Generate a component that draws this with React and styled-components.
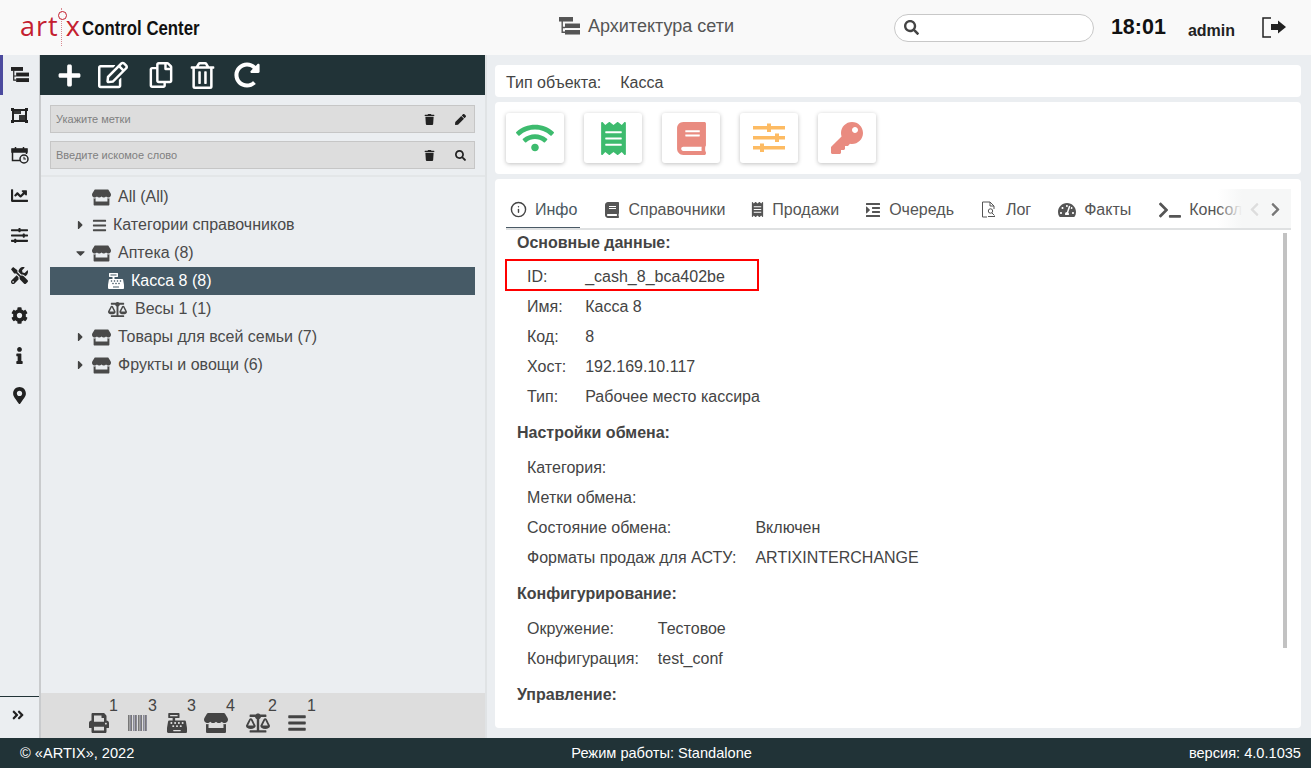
import React from 'react';
import styled, { createGlobalStyle } from 'styled-components';
import {
  FaPlus, FaRegEdit, FaRegCopy, FaRegTrashAlt, FaRedoAlt, FaTrash, FaPen, FaSearch, FaStore, FaBars,
  FaCashRegister, FaBalanceScale, FaCaretRight, FaCaretDown, FaChartLine, FaSlidersH,
  FaTools, FaCog, FaInfo, FaMapMarkerAlt, FaAngleDoubleRight, FaPrint, FaWifi, FaReceipt, FaBook, FaKey,
  FaTachometerAlt, FaChevronLeft, FaChevronRight, FaTerminal, FaIndent,
} from 'react-icons/fa';
import { FiInfo } from 'react-icons/fi';

const Global = createGlobalStyle`
  html, body { margin: 0; padding: 0; height: 100%; }
  body { font-family: "Liberation Sans", Arial, sans-serif; color: #444; background: #ebeef1; overflow: hidden; }
  * { box-sizing: border-box; }
`;

const Page = styled.div`width: 1311px; height: 768px; display: flex; flex-direction: column; overflow: hidden;`;
const Header = styled.header`height: 55px; flex: none; background: #f9f9f9; display: grid; grid-template-columns: 559px 1fr auto; align-items: center; padding-right: 24px;`;
const Logo = styled.div`display: flex; align-items: center; height: 55px; padding-left: 20px;`;
const LogoWord = styled.span`font-family: "Open Sans", sans-serif; font-size: 27px; font-weight: 400; color: #c4202f; letter-spacing: ${p => p.$spacing || 0}px; line-height: 1; margin-top: -4px;`;
const LogoStem = styled.span`position: relative; width: 8px; align-self: stretch; margin: 0 0 0 -1px;
  &::before { content: ''; position: absolute; left: 3px; top: 8px; height: 38px; border-left: 1px dotted #d98a92; }
  &::after { content: ''; position: absolute; left: 0; top: 11px; width: 7px; height: 7px; border: 1.5px solid #c4202f; border-radius: 50%; background: #f9f9f9; }
`;
const ProductName = styled.span`font-size: 21px; font-weight: 700; color: #111; margin-left: 2px; transform: scaleX(0.8); transform-origin: left center; white-space: nowrap; margin-top: 1px;`;
const Title = styled.div`display: flex; align-items: center; gap: 8px; font-size: 18px; color: #555; margin-top: -3px;`;
const HeaderRight = styled.div`display: flex; align-items: center;`;
const Search = styled.div`width: 200px; height: 28px; border: 1px solid #c8c8c8; border-radius: 14px; background: #fff; display: flex; align-items: center; padding-left: 9px; color: #444; font-size: 15px;`;
const Clock = styled.div`font-size: 21.5px; font-weight: 700; color: #111; margin-left: 17px; width: 54px;`;
const User = styled.div`font-size: 16px; font-weight: 700; color: #222; margin-left: 23px; margin-top: 6px;`;
const Logout = styled.svg`width: 25px; height: 21px; margin-left: 27px; color: #222;`;

const Main = styled.div`flex: 1; display: flex; min-height: 0;`;
const Rail = styled.nav`width: 40px; flex: none; background: #ebeef1; border-right: 1px solid #c9cbcd; display: flex; flex-direction: column;`;
const RailItem = styled.div`height: 40px; display: flex; align-items: center; justify-content: center; color: #222; font-size: 17px;
  border-left: 3px solid ${p => (p.$active ? '#4b4a9e' : 'transparent')}; padding-right: 3px;`;
const RailFoot = styled.div`margin-top: auto; height: 42px; border-top: 1px solid #213337; display: flex; align-items: center; justify-content: center; font-size: 14px; color: #222; padding: 0 3px 5px 0;`;

const TreePanel = styled.aside`width: 445px; flex: none; display: flex; flex-direction: column; background: #ebeef1;`;
const Toolbar = styled.div`height: 40px; flex: none; background: #213337; color: #fff; display: flex; align-items: center; padding-left: 17px; gap: 20px;`;
const PlusIcon = styled(FaPlus)`margin-right: -4px;`;
const TrashIcon = styled(FaRegTrashAlt)`margin-left: -5px;`;
const RedoIcon = styled(FaRedoAlt)`margin-left: -2px;`;
const PanelBody = styled.div`flex: 1; min-height: 0; display: flex; flex-direction: column; border-left: 1px solid #c9cbcd;`;
const Filters = styled.div`padding: 10px 10px 6px 9px; display: flex; flex-direction: column; gap: 8px; border-bottom: 2px solid #e3e6e8;`;
const Filter = styled.div`height: 28px; background: #ddd; border: 1px solid #c6c6c6; display: flex; align-items: center; padding: 0 8px 0 5px; font-size: 11px; color: #808080; gap: 20px;
  & > span { flex: 1; }
  & > svg { color: #222; font-size: 11px; }
`;
const Tree = styled.div`padding: 6px 10px 0 9px; display: flex; flex-direction: column; flex: 1;`;
const Node = styled.div`height: 28px; display: flex; align-items: center; font-size: 16px; padding-left: ${p => p.$pad}px; color: ${p => (p.$selected ? '#fff' : '#4a4a4a')}; background: ${p => (p.$selected ? '#465a66' : 'transparent')}; white-space: nowrap;`;
const Caret = styled.span`width: 11px; display: flex; justify-content: center; font-size: 14px; margin-right: 6px; color: #444;`;
const NodeIcon = styled.span`display: flex; align-items: center; justify-content: center; margin-right: ${p => p.$gap || 7}px; color: inherit;`;
const Counters = styled.div`height: 45px; flex: none; background: #ddd; display: flex; padding-left: 40px; gap: 4px; padding-top: 4px;`;
const Counter = styled.div`width: 35px; position: relative; display: flex; align-items: center; justify-content: center; font-size: 20px; color: #444; height: 40px; padding-top: 12px; margin-right: ${p => p.$mr || 0}px;`;
const Badge = styled.span`position: absolute; top: 0; right: -2px; font-size: 16px; line-height: 18px; color: #444;`;

const Content = styled.section`flex: 1; min-width: 0; padding: 10px 10px 10px 8px; border-left: 2px solid #e0e3e5; display: flex; flex-direction: column; gap: 5px;`;
const Card = styled.div`background: #fff; border-radius: 4px;`;
const TypeCard = styled(Card)`height: 32px; display: flex; align-items: center; padding: 3px 0 0 11px; gap: 19px; font-size: 16px; color: #444;`;
const ActionsCard = styled(Card)`height: 72px; display: flex; align-items: center; padding-left: 11px; gap: 20px;`;
const Action = styled.div`width: 58px; height: 50px; border-radius: 3px; background: #fff; box-shadow: 0 1px 4px rgba(0,0,0,.25); display: flex; align-items: center; justify-content: center; color: ${p => p.$color};`;
const InfoCard = styled(Card)`flex: 1; position: relative; overflow: hidden; padding: 10px 11px 0;`;
const Tabs = styled.div`height: 41px; display: flex; gap: 18px; border-bottom: 2px solid #dfe1e2; width: 785px; overflow: hidden; white-space: nowrap;`;
const Tab = styled.div`height: 41px; flex: none; display: flex; align-items: center; padding: 3px 3px 0 4px; gap: ${p => p.$gap || 8}px; margin-left: ${p => p.$ml || 0}px; font-size: 16px; color: ${p => (p.$active ? '#4a5862' : '#555')}; border-bottom: 3px solid ${p => (p.$active ? '#4a5a66' : 'transparent')};`;
const TabFade = styled.div`position: absolute; top: 10px; left: 722px; width: 74px; height: 39px; background: linear-gradient(to right, rgba(255,255,255,0), #f6f7f7 34%); display: flex; align-items: center; justify-content: flex-end; gap: 6px; padding: 2px 8px 0 0; font-size: 15px; color: #777;`;
const FadedArrow = styled.span`color: #ddd; display: flex;`;
const Arrow = styled.span`color: #777; display: flex;`;
const Scrollbar = styled.div`position: absolute; left: 788px; top: 54px; width: 4px; height: 415px; background: #c2c2c2;`;
const Body = styled.div`position: relative; padding: 3px 0 0 11px;`;
const Heading = styled.div`font-size: 16px; font-weight: 700; color: #444; line-height: 20px;`;
const Fields = styled.div`display: grid; grid-template-columns: max-content max-content; column-gap: 19px; padding-left: 10px; font-size: 16px; color: #444; grid-auto-rows: ${p => p.$row || 30}px; align-items: center; margin: ${p => p.$top}px 0 ${p => p.$bottom}px;`;
const Highlight = styled.div`position: absolute; left: -1px; top: 29px; width: 254px; height: 32px; border: 2.5px solid #f00;`;

const Footer = styled.footer`height: 30px; flex: none; background: #213337; color: #fff; font-size: 14.6px; display: flex; align-items: center; justify-content: space-between; padding: 0 10px 0 20px;`;

const TreeGlyph = ({ size = 18 }) => (
  <svg width={size} height={size * 0.86} viewBox="0 0 21 18" fill="currentColor">
    <rect x="0" y="0" width="14" height="4.5" /><rect x="6" y="6.5" width="15" height="4.5" /><rect x="6" y="13" width="15" height="4.5" />
    <path d="M2.5 4h1.4v5.8H6v1.4H3.9v3.4H6V16H2.5z" />
  </svg>
);
const FrameGlyph = () => (
  <svg width="17" height="15" viewBox="0 0 17 15" fill="currentColor">
    <path d="M0 0h3v1h11V0h3v3h-1v9h1v3h-3v-1H3v1H0v-3h1V3H0zM3 3v9h11V3z" fillRule="evenodd" />
    <path d="M8 7h6v5H8zM3 3h7v3H3z" opacity="0.9" />
  </svg>
);
const CalClock = () => (
  <svg width="18" height="18" viewBox="0 0 18 18" fill="none" stroke="currentColor" strokeWidth="1.5">
    <path d="M9 14.5H1.5V3.5h14V8" /><path d="M1 3h15v3H1z" fill="currentColor" /><path d="M4.5 1v3M12.5 1v3" />
    <circle cx="13" cy="13" r="4" fill="#ebeef1" /><path d="M13 10.8V13h2" strokeWidth="1.1" />
  </svg>
);
const Barcode = () => (
  <svg width="20" height="16" viewBox="0 0 20 16">
    {[0,2,3,5,7,8,10,12,13,15,17,18].map((x, i) => <rect key={x} x={x} y="0" width={i % 3 === 0 ? 1.6 : 1} height="16" fill={i % 2 ? '#8a8a9a' : '#777'} />)}
  </svg>
);
const LogGlyph = () => (
  <svg width="16" height="17" viewBox="0 0 16 17" fill="none" stroke="#555" strokeWidth="1">
    <path d="M6 16H1.5V1H9l4 4v3" /><path d="M9 1v4h4" /><circle cx="9.5" cy="10" r="2.2" /><path d="M11 12l2.5 2.5M7 15.5h7" />
  </svg>
);
const Sliders = () => (
  <svg width="34" height="30" viewBox="0 0 34 30" fill="#fdbb63">
    <rect x="1" y="3" width="32" height="3.5" /><rect x="15" y="0.5" width="4" height="8.5" />
    <rect x="1" y="13" width="32" height="3.5" /><rect x="23" y="10.5" width="4" height="8.5" />
    <rect x="1" y="23" width="32" height="3.5" /><rect x="8" y="20.5" width="4" height="8.5" />
  </svg>
);

const Field = ({ k, v }) => (<><span>{k}</span><span>{v}</span></>);

export default function App() {
  return (
    <Page>
      <Global />
      <Header>
        <Logo>
          <LogoWord $spacing={1}>art</LogoWord><LogoStem /><LogoWord>x</LogoWord>
          <ProductName>Control Center</ProductName>
        </Logo>
        <Title><TreeGlyph size={21} />Архитектура сети</Title>
        <HeaderRight>
          <Search><FaSearch /></Search>
          <Clock>18:01</Clock>
          <User>admin</User>
          <Logout viewBox="0 0 25 21" fill="none" stroke="currentColor">
            <path d="M9 1H1v19h8" strokeWidth="1.5" />
            <path d="M9 7h7V3.5l8 6.5-8 6.5V13H9z" fill="currentColor" stroke="none" />
          </Logout>
        </HeaderRight>
      </Header>
      <Main>
        <Rail>
          <RailItem $active><TreeGlyph size={18} /></RailItem>
          <RailItem><FrameGlyph /></RailItem>
          <RailItem><CalClock /></RailItem>
          <RailItem><FaChartLine /></RailItem>
          <RailItem><FaSlidersH /></RailItem>
          <RailItem><FaTools /></RailItem>
          <RailItem><FaCog /></RailItem>
          <RailItem><FaInfo /></RailItem>
          <RailItem><FaMapMarkerAlt /></RailItem>
          <RailFoot><FaAngleDoubleRight /></RailFoot>
        </Rail>
        <TreePanel>
          <Toolbar><PlusIcon size={25} /><FaRegEdit size={30} /><FaRegCopy size={26} /><TrashIcon size={27} /><RedoIcon size={26} /></Toolbar>
          <PanelBody>
            <Filters>
              <Filter><span>Укажите метки</span><FaTrash /><FaPen /></Filter>
              <Filter><span>Введите искомое слово</span><FaTrash /><FaSearch /></Filter>
            </Filters>
            <Tree>
              <Node $pad={42}><NodeIcon><FaStore size={19} /></NodeIcon>All (All)</Node>
              <Node $pad={25}><Caret><FaCaretRight /></Caret><NodeIcon $gap={6}><FaBars size={15} /></NodeIcon>Категории справочников</Node>
              <Node $pad={25}><Caret><FaCaretDown /></Caret><NodeIcon><FaStore size={19} /></NodeIcon>Аптека (8)</Node>
              <Node $pad={58} $selected><NodeIcon $gap={7}><FaCashRegister size={16} /></NodeIcon>Касса 8 (8)</Node>
              <Node $pad={58}><NodeIcon $gap={8}><FaBalanceScale size={19} /></NodeIcon>Весы 1 (1)</Node>
              <Node $pad={25}><Caret><FaCaretRight /></Caret><NodeIcon><FaStore size={19} /></NodeIcon>Товары для всей семьи (7)</Node>
              <Node $pad={25}><Caret><FaCaretRight /></Caret><NodeIcon><FaStore size={19} /></NodeIcon>Фрукты и овощи (6)</Node>
            </Tree>
            <Counters>
              <Counter><FaPrint /><Badge>1</Badge></Counter>
              <Counter><Barcode /><Badge>3</Badge></Counter>
              <Counter><FaCashRegister /><Badge>3</Badge></Counter>
              <Counter $mr={3}><FaStore size={24} /><Badge>4</Badge></Counter>
              <Counter><FaBalanceScale size={24} /><Badge>2</Badge></Counter>
              <Counter><FaBars /><Badge>1</Badge></Counter>
            </Counters>
          </PanelBody>
        </TreePanel>
        <Content>
          <TypeCard><span>Тип объекта:</span><span>Касса</span></TypeCard>
          <ActionsCard>
            <Action $color="#3dbb6e"><FaWifi size={38} /></Action>
            <Action $color="#3dbb6e"><FaReceipt size={33} /></Action>
            <Action $color="#e98b80"><FaBook size={33} /></Action>
            <Action><Sliders /></Action>
            <Action $color="#e98b80"><FaKey size={32} /></Action>
          </ActionsCard>
          <InfoCard>
            <Tabs>
              <Tab $active><FiInfo size={17} color="#444" />Инфо</Tab>
              <Tab $ml={2}><FaBook size={16} />Справочники</Tab>
              <Tab $gap={7}><FaReceipt size={15} />Продажи</Tab>
              <Tab $ml={1}><FaIndent size={16} />Очередь</Tab>
              <Tab $ml={2} $gap={9}><LogGlyph />Лог</Tab>
              <Tab $ml={2}><FaTachometerAlt size={18} />Факты</Tab>
              <Tab $ml={3} $gap={8}><FaTerminal size={22} />Консоль</Tab>
            </Tabs>
            <TabFade><FadedArrow><FaChevronLeft /></FadedArrow><Arrow><FaChevronRight /></Arrow></TabFade>
            <Scrollbar />
            <Body>
              <Heading>Основные данные:</Heading>
              <Highlight />
              <Fields $top={9} $bottom={11}>
                <Field k="ID:" v="_cash_8_bca402be" />
                <Field k="Имя:" v="Касса 8" />
                <Field k="Код:" v="8" />
                <Field k="Хост:" v="192.169.10.117" />
                <Field k="Тип:" v="Рабочее место кассира" />
              </Fields>
              <Heading>Настройки обмена:</Heading>
              <Fields $top={10.3} $bottom={11.9} $row={29.8}>
                <Field k="Категория:" v="" />
                <Field k="Метки обмена:" v="" />
                <Field k="Состояние обмена:" v="Включен" />
                <Field k="Форматы продаж для АСТУ:" v="ARTIXINTERCHANGE" />
              </Fields>
              <Heading>Конфигурирование:</Heading>
              <Fields $top={10} $bottom={11}>
                <Field k="Окружение:" v="Тестовое" />
                <Field k="Конфигурация:" v="test_conf" />
              </Fields>
              <Heading>Управление:</Heading>
            </Body>
          </InfoCard>
        </Content>
      </Main>
      <Footer>
        <span>© «ARTIX», 2022</span>
        <span>Режим работы: Standalone</span>
        <span>версия: 4.0.1035</span>
      </Footer>
    </Page>
  );
}
